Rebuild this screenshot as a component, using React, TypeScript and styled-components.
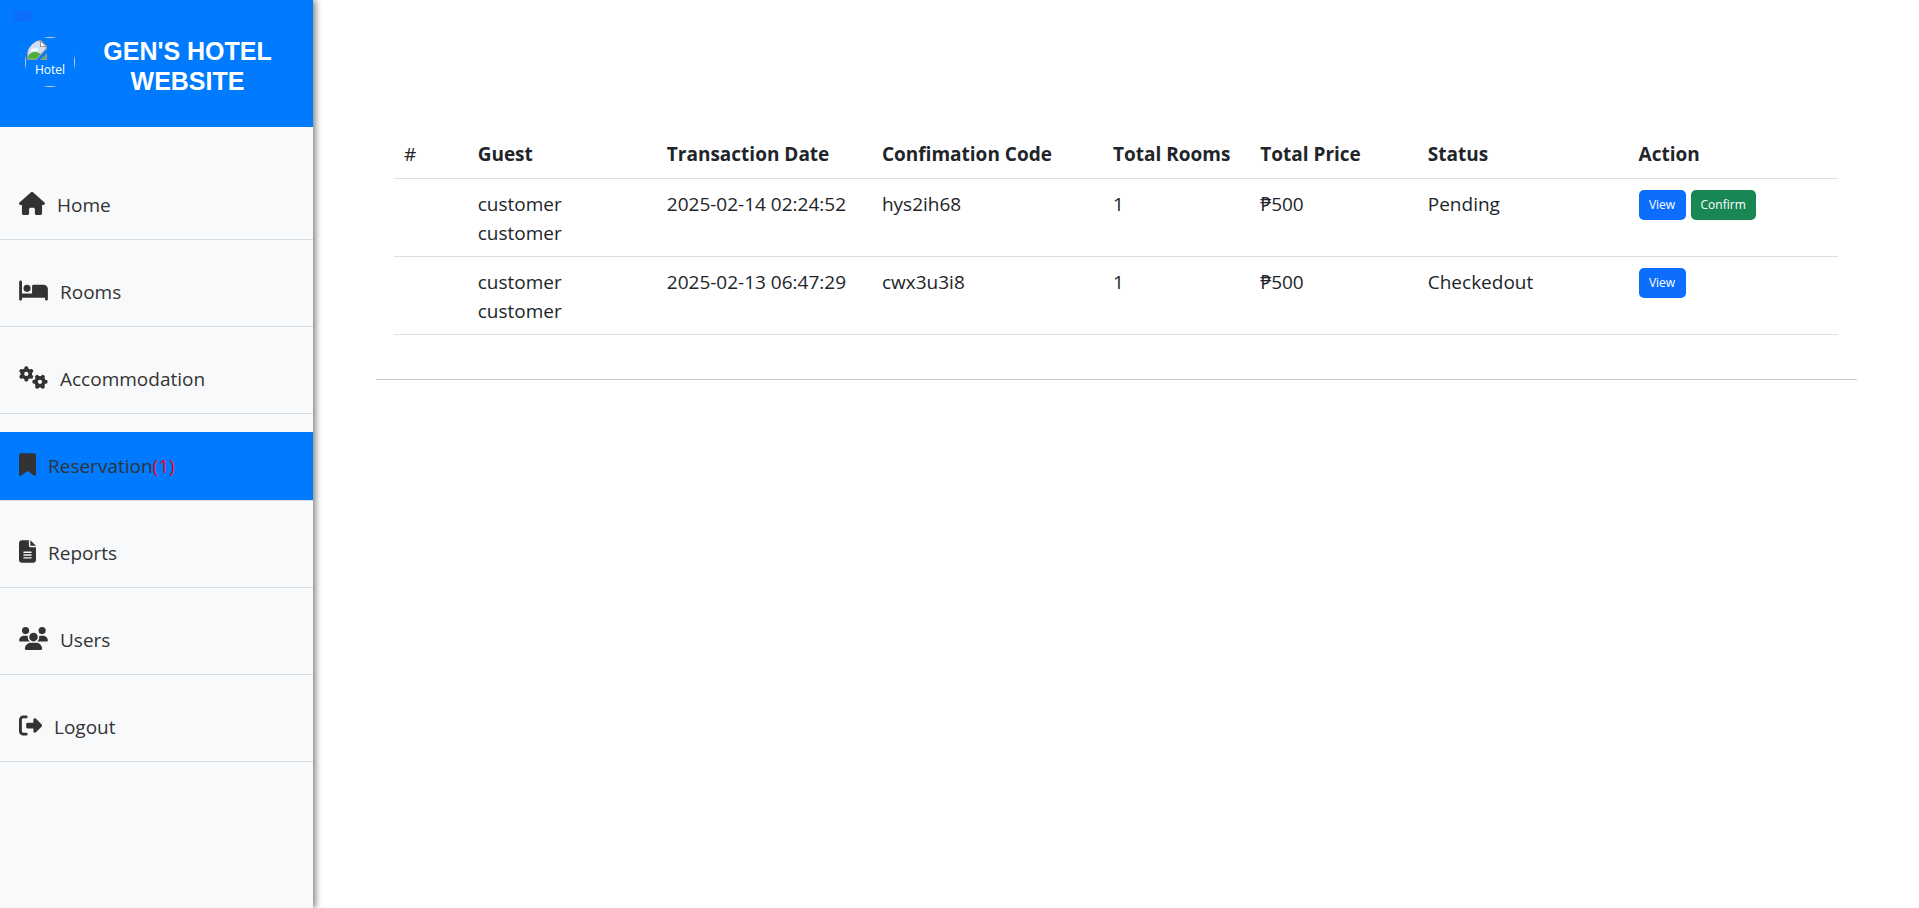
import React from "react";
import styled, { createGlobalStyle } from "styled-components";
import {
  FaHouse,
  FaBed,
  FaGears,
  FaBookmark,
  FaFileLines,
  FaUsers,
  FaRightFromBracket,
} from "react-icons/fa6";

const GlobalStyle = createGlobalStyle`
  *, *::before, *::after { box-sizing: border-box; }
  body {
    margin: 0;
    background: #fff;
    color: #212529;
    font-family: "Open Sans", "Noto Sans", sans-serif;
    font-size: 19px;
    line-height: 29px;
  }
`;

const Page = styled.div`
  display: flex;
  min-height: 100vh;
`;

const Sidebar = styled.aside`
  flex: 0 0 313px;
  background: #f8f9fa;
  box-shadow: 3px 0 6px rgba(0, 0, 0, 0.45);
`;

const Brand = styled.header`
  position: relative;
  display: flex;
  align-items: flex-start;
  padding: 36px 25px 31px;
  background: #007bff;
`;

const MenuToggle = styled.button`
  position: absolute;
  top: 11px;
  left: 13px;
  width: 20px;
  height: 11px;
  padding: 0;
  border: 0;
  border-radius: 5px;
  background: #0d6efd;
`;

const LogoFrame = styled.div`
  display: flex;
  flex-direction: column;
  flex: 0 0 50px;
  height: 50px;
  margin-top: 1px;
  padding: 3px 2px;
  border-radius: 50%;
  overflow: hidden;
  background:
    linear-gradient(#d4d4d4, #d4d4d4) top / 100% 1px no-repeat,
    linear-gradient(#d4d4d4, #d4d4d4) bottom / 100% 1px no-repeat,
    linear-gradient(#d4d4d4, #d4d4d4) left / 1px 100% no-repeat,
    linear-gradient(#d4d4d4, #d4d4d4) right / 1px 100% no-repeat;
`;

const LogoText = styled.span`
  color: #fff;
  font-size: 12px;
  line-height: 19px;
  text-align: center;
`;

const BrandName = styled.h1`
  flex: 1;
  margin: 0 0 0 12px;
  color: #fff;
  font-family: "Liberation Sans", Arial, sans-serif;
  font-size: 25px;
  font-weight: 700;
  line-height: 30px;
  text-align: center;
`;

const NavList = styled.ul`
  display: flex;
  flex-direction: column;
  gap: 18px;
  margin: 44px 0 0;
  padding: 0;
  list-style: none;
`;

const NavLink = styled.a<{ $active?: boolean }>`
  display: flex;
  align-items: center;
  gap: 12px;
  height: 69px;
  padding: 0 19px;
  border-bottom: 1px solid #d9dcdf;
  background: ${(p) => (p.$active ? "#007bff" : "transparent")};
  background-clip: padding-box;
  color: #333;
  text-decoration: none;
`;

const NavIcon = styled.span<{ $width: number }>`
  display: flex;
  width: ${(p) => p.$width}px;
  padding-bottom: 3px;

  svg {
    width: 100%;
    height: 23px;
  }
`;

const Count = styled.span`
  color: #f00020;
`;

const Main = styled.main`
  flex: 1;
  min-width: 0;
  padding: 130px 62px 0 63px;
`;

const Panel = styled.section`
  padding: 0 19px 44px 18px;
  border-bottom: 1px solid #c8c9ca;
`;

const Table = styled.table`
  width: 100%;
  table-layout: fixed;
  border-spacing: 0;
  text-align: left;
`;

const Column = styled.col<{ $share: number }>`
  width: ${(p) => p.$share}%;
`;

const HeadCell = styled.th<{ $light?: boolean }>`
  padding: 10px 10px 9px;
  border-bottom: 1px solid #dcdee0;
  font-weight: ${(p) => (p.$light ? 400 : 700)};
  white-space: nowrap;
`;

const Cell = styled.td`
  padding: 11px 10px 8px;
  border-bottom: 1px solid #dcdee0;
  vertical-align: top;
`;

const GuestName = styled.div`
  width: min-content;
`;

const Actions = styled.div`
  display: flex;
  gap: 5px;
`;

const ActionButton = styled.button<{ $tone: "view" | "confirm" }>`
  min-width: 47px;
  height: 30px;
  padding: 0 10px;
  border: 0;
  border-radius: 5px;
  background: ${(p) => (p.$tone === "view" ? "#0d6efd" : "#198754")};
  color: #fff;
  font-family: inherit;
  font-size: 12px;
  line-height: 18px;
`;

const navItems = [
  { label: "Home", icon: FaHouse, width: 26 },
  { label: "Rooms", icon: FaBed, width: 29 },
  { label: "Accommodation", icon: FaGears, width: 29 },
  { label: "Reservation", icon: FaBookmark, width: 17, active: true, count: 1 },
  { label: "Reports", icon: FaFileLines, width: 17 },
  { label: "Users", icon: FaUsers, width: 29 },
  { label: "Logout", icon: FaRightFromBracket, width: 23 },
];

const columns = [
  { title: "#", share: 5.1, light: true },
  { title: "Guest", share: 13.1 },
  { title: "Transaction Date", share: 14.9 },
  { title: "Confimation Code", share: 16 },
  { title: "Total Rooms", share: 10.2 },
  { title: "Total Price", share: 11.6 },
  { title: "Status", share: 14.6 },
  { title: "Action", share: 14.5 },
];

const reservations = [
  { guest: "customer customer", date: "2025-02-14 02:24:52", code: "hys2ih68", rooms: 1, price: 500, status: "Pending" },
  { guest: "customer customer", date: "2025-02-13 06:47:29", code: "cwx3u3i8", rooms: 1, price: 500, status: "Checkedout" },
];

const MissingImageIcon = () => (
  <svg width="20" height="20" viewBox="0 0 20 20" aria-hidden="true">
    <path d="M0 8L5 1.500L9 0H14L20 6V9L9.500 20H0Z" fill="#98999c" />
    <path d="M1.200 8L6 2.200L9 1.200H13V7H18.800V8.500L8.500 18.800H1.200Z" fill="#cfe0f7" />
    <path d="M14 2V6H18Z" fill="#fff" />
    <path d="M4 11c0-2 2-3 3-2 1-2 5-1 4 2z" fill="#fff" />
    <path d="M1.200 18.800V16C4 11.500 9 11 13.500 14L8.800 18.800Z" fill="#4fae38" />
    <path d="M20 13V20H13Z" fill="#98999c" />
    <path d="M18.800 15.500V18.800H15.500Z" fill="#4fae38" />
  </svg>
);

export default function App() {
  return (
    <>
      <GlobalStyle />
      <Page>
        <Sidebar>
          <Brand>
            <MenuToggle type="button" aria-label="Toggle menu" />
            <LogoFrame>
              <MissingImageIcon />
              <LogoText>Hotel</LogoText>
            </LogoFrame>
            <BrandName>GEN'S HOTEL WEBSITE</BrandName>
          </Brand>
          <nav>
            <NavList>
              {navItems.map(({ label, icon: Icon, width, active, count }) => (
                <li key={label}>
                  <NavLink href="#" $active={active}>
                    <NavIcon $width={width}>
                      <Icon />
                    </NavIcon>
                    <span>
                      {label}
                      {count && <Count>({count})</Count>}
                    </span>
                  </NavLink>
                </li>
              ))}
            </NavList>
          </nav>
        </Sidebar>
        <Main>
          <Panel>
            <Table>
              <colgroup>
                {columns.map((c) => (
                  <Column key={c.title} $share={c.share} />
                ))}
              </colgroup>
              <thead>
                <tr>
                  {columns.map((c) => (
                    <HeadCell key={c.title} scope="col" $light={c.light}>
                      {c.title}
                    </HeadCell>
                  ))}
                </tr>
              </thead>
              <tbody>
                {reservations.map((r) => (
                  <tr key={r.code}>
                    <Cell />
                    <Cell>
                      <GuestName>{r.guest}</GuestName>
                    </Cell>
                    <Cell>{r.date}</Cell>
                    <Cell>{r.code}</Cell>
                    <Cell>{r.rooms}</Cell>
                    <Cell>₱{r.price}</Cell>
                    <Cell>{r.status}</Cell>
                    <Cell>
                      <Actions>
                        <ActionButton type="button" $tone="view">View</ActionButton>
                        {r.status === "Pending" && (
                          <ActionButton type="button" $tone="confirm">Confirm</ActionButton>
                        )}
                      </Actions>
                    </Cell>
                  </tr>
                ))}
              </tbody>
            </Table>
          </Panel>
        </Main>
      </Page>
    </>
  );
}
